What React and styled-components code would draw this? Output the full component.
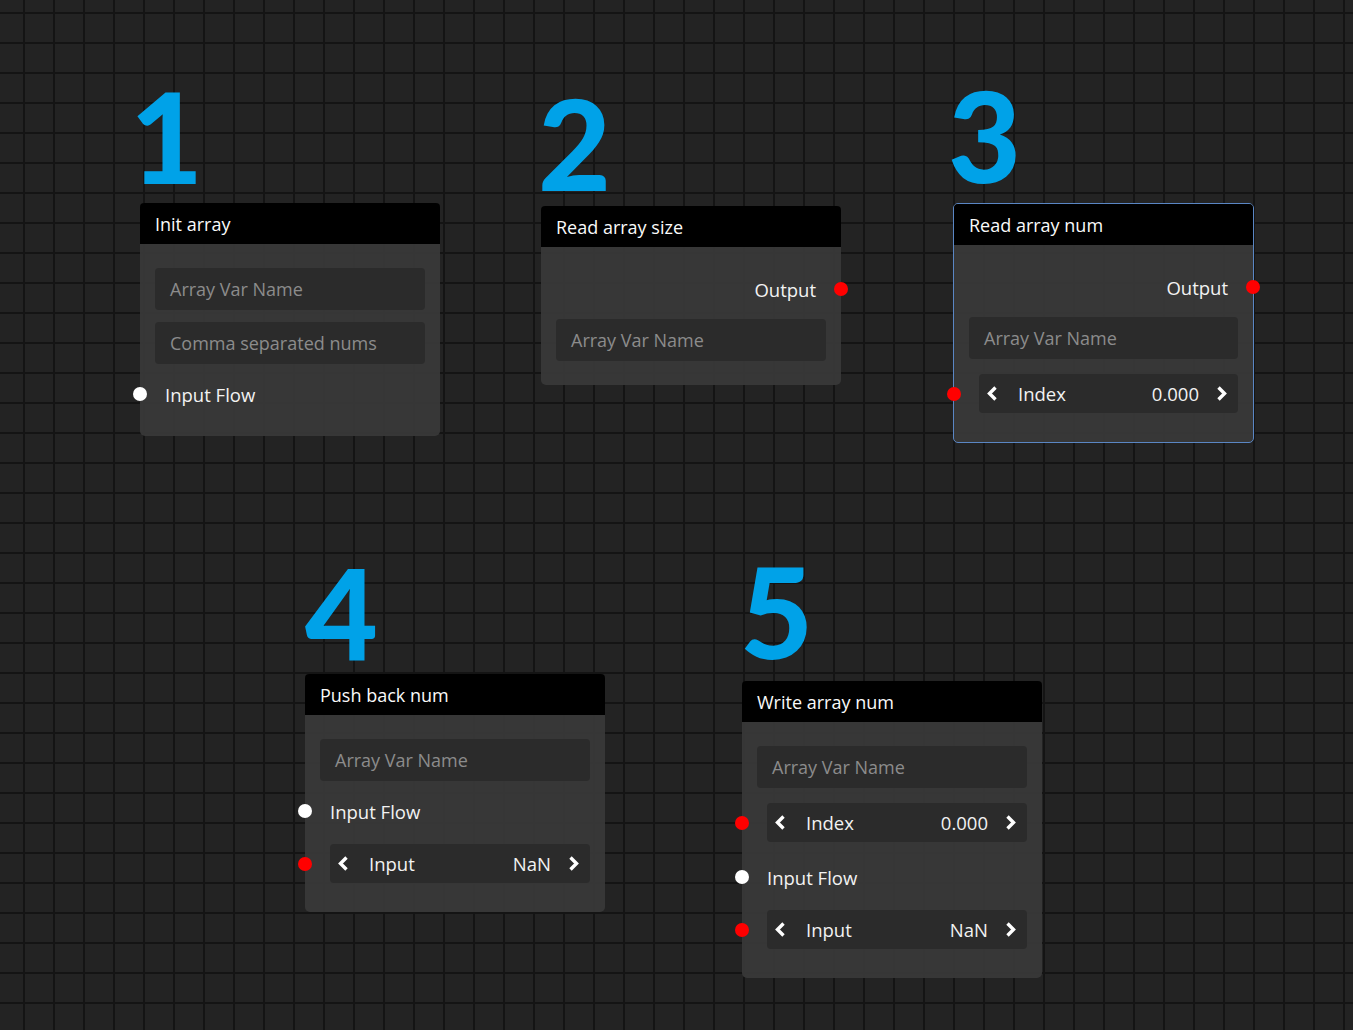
import React from 'react';
import styled, {createGlobalStyle} from 'styled-components';

const GlobalStyle = createGlobalStyle`
    html, body {
        margin: 0;
        padding: 0;
        background: #232323;
        overflow: hidden;
    }
`;

const nodes = [
    {
        id: 1, title: 'Init array', x: 140, y: 203,
        label: {x: 130, y: 90},
        rows: [
            {type: 'text', text: 'Array Var Name'},
            {type: 'text', text: 'Comma separated nums'},
            {type: 'flow', text: 'Input Flow'},
        ],
    },
    {
        id: 2, title: 'Read array size', x: 541, y: 206,
        label: {x: 538, y: 97},
        rows: [
            {type: 'output', text: 'Output'},
            {type: 'text', text: 'Array Var Name'},
        ],
    },
    {
        id: 3, title: 'Read array num', x: 953, y: 203, selected: true,
        label: {x: 948, y: 89},
        rows: [
            {type: 'output', text: 'Output'},
            {type: 'text', text: 'Array Var Name'},
            {type: 'number', text: 'Index', value: '0.000'},
        ],
    },
    {
        id: 4, title: 'Push back num', x: 305, y: 674,
        label: {x: 305, y: 567},
        rows: [
            {type: 'text', text: 'Array Var Name'},
            {type: 'flow', text: 'Input Flow'},
            {type: 'number', text: 'Input', value: 'NaN'},
        ],
    },
    {
        id: 5, title: 'Write array num', x: 742, y: 681,
        label: {x: 740, y: 565},
        rows: [
            {type: 'text', text: 'Array Var Name'},
            {type: 'number', text: 'Index', value: '0.000'},
            {type: 'flow', text: 'Input Flow'},
            {type: 'number', text: 'Input', value: 'NaN'},
        ],
    },
];

function Chevron ({dir}) {
    const points = dir === 'left' ? '9.5,1.5 3.5,7.5 9.5,13.5' : '1.5,1.5 7.5,7.5 1.5,13.5';
    return (
        <svg width="11" height="15" viewBox="0 0 11 15">
            <polyline points={points} fill="none" stroke="#fff" strokeWidth="3.4" strokeLinejoin="miter" strokeLinecap="butt"/>
        </svg>
    );
}

function NodeRow ({row}) {
    if (row.type === 'text') {
        return <TextField>{row.text}</TextField>;
    }
    if (row.type === 'output') {
        return (
            <SocketRow $align="right">
                {row.text}
                <Socket $side="right" $color="#ff0000"/>
            </SocketRow>
        );
    }
    if (row.type === 'flow') {
        return (
            <SocketRow>
                <Socket $side="left" $color="#ffffff"/>
                {row.text}
            </SocketRow>
        );
    }
    return (
        <NumberField>
            <Socket $side="left" $color="#ff0000" $offset={25}/>
            <Chevron dir="left"/>
            <NumberLabel>{row.text}</NumberLabel>
            <NumberValue>{row.value}</NumberValue>
            <Chevron dir="right"/>
        </NumberField>
    );
}

export default function App () {
    return (
        <Board>
            <GlobalStyle/>
            {nodes.map((node) => (
                <React.Fragment key={node.id}>
                    <BigNumber $x={node.label.x} $y={node.label.y}>{node.id}</BigNumber>
                    <Node $x={node.x} $y={node.y} $selected={node.selected}>
                        <NodeHeader>{node.title}</NodeHeader>
                        <NodeBody>
                            {node.rows.map((row, i) => (
                                <NodeRow key={i} row={row}/>
                            ))}
                        </NodeBody>
                    </Node>
                </React.Fragment>
            ))}
        </Board>
    );
}

const Board = styled.div`
    position: relative;
    width: 100vw;
    height: 100vh;
    background-color: #232323;
    background-image:
        linear-gradient(to right, #141414 2px, transparent 2px),
        linear-gradient(to bottom, #141414 2px, transparent 2px);
    background-size: 30px 30px;
    background-position: 23px 12px;
    font-family: "Open Sans", "Noto Sans", sans-serif;
    color: #f2f2f2;
`;

const BigNumber = styled.div`
    position: absolute;
    left: ${(p) => p.$x}px;
    top: ${(p) => p.$y}px;
    font-family: Lato, sans-serif;
    font-weight: 900;
    font-size: 126px;
    line-height: 92px;
    color: #00a2e8;
`;

const Node = styled.div`
    position: absolute;
    left: ${(p) => p.$x}px;
    top: ${(p) => p.$y}px;
    width: ${(p) => p.$selected ? '301px' : '300px'};
    box-sizing: border-box;
    border-radius: 5px;
    border: ${(p) => p.$selected ? '1px solid #5a86c4' : 'none'};
    background: rgba(56, 56, 56, 0.94);
`;

const NodeHeader = styled.div`
    height: 41px;
    display: flex;
    align-items: center;
    padding: 0 15px;
    background: #000;
    border-radius: 4px 4px 0 0;
    font-size: 18px;
    color: #fafafa;
`;

const NodeBody = styled.div`
    display: flex;
    flex-direction: column;
    gap: 12px;
    padding: 24px 15px;
`;

const TextField = styled.div`
    height: 42px;
    display: flex;
    align-items: center;
    padding: 0 15px;
    border-radius: 4px;
    background: #2b2b2b;
    font-size: 18px;
    color: #8c8c8c;
`;

const SocketRow = styled.div`
    position: relative;
    height: 36px;
    display: flex;
    align-items: center;
    justify-content: ${(p) => p.$align === 'right' ? 'flex-end' : 'flex-start'};
    padding: ${(p) => p.$align === 'right' ? '0 10px 0 0' : '0 0 0 10px'};
    font-size: 18.5px;
`;

const Socket = styled.span`
    position: absolute;
    top: 50%;
    ${(p) => p.$side === 'right' ? 'right: -15px;' : `left: -${p.$offset || 15}px;`}
    width: 14px;
    height: 14px;
    margin-top: -7px;
    margin-${(p) => p.$side === 'right' ? 'right' : 'left'}: -7px;
    border-radius: 50%;
    background: ${(p) => p.$color};
`;

const NumberField = styled.div`
    position: relative;
    height: 39px;
    margin: 3px 0 5px 10px;
    display: flex;
    align-items: center;
    padding: 0 10px 0 7px;
    border-radius: 4px;
    background: #2b2b2b;
    font-size: 18.5px;
`;

const NumberLabel = styled.span`
    margin-left: 21px;
    flex: 1;
`;

const NumberValue = styled.span`
    margin-right: 18px;
`;
